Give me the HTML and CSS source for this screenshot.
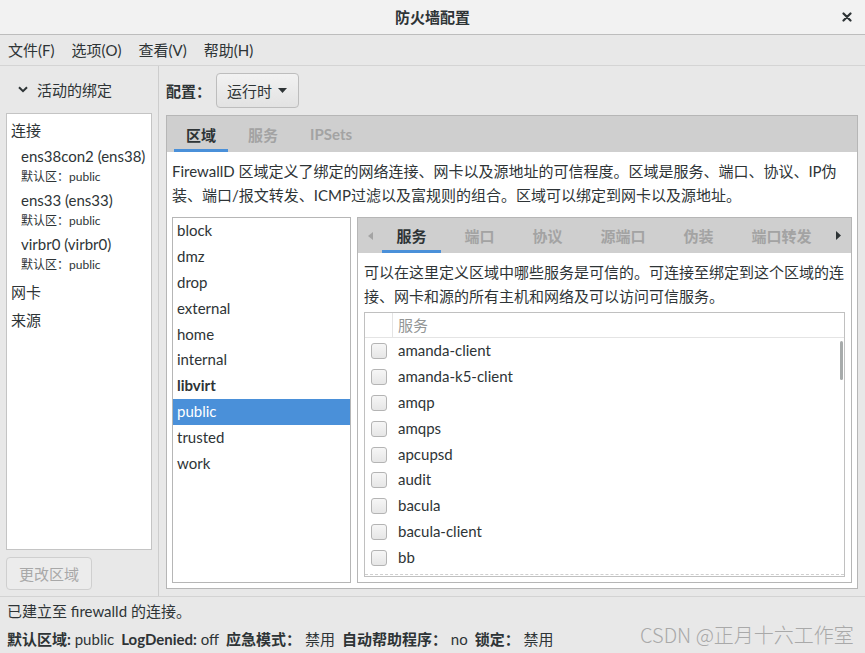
FILE: index.html
```html
<!DOCTYPE html>
<html lang="zh-CN">
<head>
<meta charset="utf-8">
<title>防火墙配置</title>
<link rel="stylesheet" href="styles.css">
</head>
<body>
<div class="window">
  <header class="titlebar">
    <span></span>
    <span class="title">防火墙配置</span>
    <span class="close">
      <svg width="10" height="10" viewBox="0 0 10 10"><path d="M1.5 1.5 L8.5 8.5 M8.5 1.5 L1.5 8.5" stroke="#2e3436" stroke-width="2.2" stroke-linecap="round"/></svg>
    </span>
  </header>
  <nav class="menubar">
    <span>文件(F)</span>
    <span>选项(O)</span>
    <span>查看(V)</span>
    <span>帮助(H)</span>
  </nav>
  <div class="main">
    <aside class="sidebar">
      <div class="side-head">
        <svg class="chev" width="10" height="7" viewBox="0 0 10 7"><path d="M1 1.2 L5 5.2 L9 1.2" fill="none" stroke="#2e3436" stroke-width="2"/></svg>
        <span>活动的绑定</span>
      </div>
      <div class="bindings">
        <div class="group">连接</div>
        <div class="device"><div class="dev-name">ens38con2 (ens38)</div><div class="dev-zone">默认区：public</div></div>
        <div class="device"><div class="dev-name">ens33 (ens33)</div><div class="dev-zone">默认区：public</div></div>
        <div class="device"><div class="dev-name">virbr0 (virbr0)</div><div class="dev-zone">默认区：public</div></div>
        <div class="group group-gap">网卡</div>
        <div class="group">来源</div>
      </div>
      <div class="side-foot">
        <button class="btn btn-disabled">更改区域</button>
      </div>
    </aside>
    <section class="content">
      <div class="config-row">
        <span class="config-label">配置：</span>
        <button class="btn combo">运行时
          <svg width="9" height="5" viewBox="0 0 9 5"><path d="M0 0 L9 0 L4.5 5 Z" fill="#2e3436"/></svg>
        </button>
      </div>
      <div class="notebook outer">
        <div class="tabs outer-tabs">
          <span class="tab active">区域</span>
          <span class="tab">服务</span>
          <span class="tab">IPSets</span>
        </div>
        <div class="page outer-page">
          <p class="desc">FirewallD 区域定义了绑定的网络连接、网卡以及源地址的可信程度。区域是服务、端口、协议、IP伪<br>装、端口/报文转发、ICMP过滤以及富规则的组合。区域可以绑定到网卡以及源地址。</p>
          <div class="zone-area">
            <ul class="zone-list">
              <li>block</li>
              <li>dmz</li>
              <li>drop</li>
              <li>external</li>
              <li>home</li>
              <li>internal</li>
              <li class="bold">libvirt</li>
              <li class="selected">public</li>
              <li>trusted</li>
              <li>work</li>
            </ul>
            <div class="notebook inner">
              <div class="tabs inner-tabs">
                <span class="arrow">
                  <svg width="5" height="8" viewBox="0 0 5 8"><path d="M5 0 L0 4 L5 8 Z" fill="#a4a4a4"/></svg>
                </span>
                <div class="inner-tab-list">
                  <span class="tab itab active">服务</span>
                  <span class="tab itab">端口</span>
                  <span class="tab itab">协议</span>
                  <span class="tab itab">源端口</span>
                  <span class="tab itab">伪装</span>
                  <span class="tab itab">端口转发</span>
                </div>
                <span class="arrow arrow-right">
                  <svg width="5" height="9" viewBox="0 0 5 9"><path d="M0 0 L5 4.5 L0 9 Z" fill="#2e3436"/></svg>
                </span>
              </div>
              <div class="page inner-page">
                <p class="desc inner-desc">可以在这里定义区域中哪些服务是可信的。可连接至绑定到这个区域的连<br>接、网卡和源的所有主机和网络及可以访问可信服务。</p>
                <div class="svc-table">
                  <div class="svc-head">
                    <span class="col-check"></span>
                    <span class="col-name head-name">服务</span>
                  </div>
                  <div class="svc-body">
                    <div class="svc-row"><span class="col-check"><span class="checkbox"></span></span><span class="col-name">amanda-client</span></div>
                    <div class="svc-row"><span class="col-check"><span class="checkbox"></span></span><span class="col-name">amanda-k5-client</span></div>
                    <div class="svc-row"><span class="col-check"><span class="checkbox"></span></span><span class="col-name">amqp</span></div>
                    <div class="svc-row"><span class="col-check"><span class="checkbox"></span></span><span class="col-name">amqps</span></div>
                    <div class="svc-row"><span class="col-check"><span class="checkbox"></span></span><span class="col-name">apcupsd</span></div>
                    <div class="svc-row"><span class="col-check"><span class="checkbox"></span></span><span class="col-name">audit</span></div>
                    <div class="svc-row"><span class="col-check"><span class="checkbox"></span></span><span class="col-name">bacula</span></div>
                    <div class="svc-row"><span class="col-check"><span class="checkbox"></span></span><span class="col-name">bacula-client</span></div>
                    <div class="svc-row"><span class="col-check"><span class="checkbox"></span></span><span class="col-name">bb</span></div>
                    <span class="scrollbar"></span>
                  </div>
                  <div class="svc-foot"></div>
                </div>
              </div>
            </div>
          </div>
        </div>
      </div>
    </section>
  </div>
  <footer class="statusbar">
    <div class="status-line">已建立至 firewalld 的连接。</div>
    <div class="status-line status-info">
      <span><b>默认区域:</b> public</span>
      <span><b>LogDenied:</b> off</span>
      <span><b>应急模式：</b> 禁用</span>
      <span><b>自动帮助程序：</b> no</span>
      <span><b>锁定：</b> 禁用</span>
    </div>
  </footer>
  <div class="watermark">CSDN @正月十六工作室</div>
</div>
</body>
</html>
```
FILE: styles.css
```css
html, body {
  margin: 0;
  padding: 0;
}
body {
  width: 865px;
  height: 653px;
  overflow: hidden;
  background: #e8e8e8;
  font-family: Lato, "Noto Sans CJK SC", sans-serif;
  font-size: 15px;
  color: #2e3436;
}
.window {
  position: relative;
  height: 653px;
  display: flex;
  flex-direction: column;
}

/* title bar */
.titlebar {
  height: 34px;
  flex: none;
  background: #f2f2f2;
  border-bottom: 1px solid #bdbdbd;
  display: grid;
  grid-template-columns: 1fr auto 1fr;
  align-items: center;
}
.title {
  font-weight: bold;
  line-height: 34px;
}
.close {
  justify-self: end;
  margin-right: 13px;
  display: flex;
}

/* menu bar */
.menubar {
  height: 30px;
  flex: none;
  border-bottom: 1px solid #d4d4d4;
  display: flex;
  align-items: center;
  gap: 17px;
  padding-left: 8px;
  line-height: 30px;
}

/* main */
.main {
  display: flex;
  height: 530px;
  flex: none;
}
.sidebar {
  box-sizing: border-box;
  width: 159px;
  border-right: 1px solid #cdcdcd;
  padding: 0 6px 6px;
  display: flex;
  flex-direction: column;
}
.side-head {
  height: 47px;
  flex: none;
  display: flex;
  align-items: center;
  gap: 9px;
  padding-left: 12px;
}
.bindings {
  flex: 1;
  background: #fff;
  border: 1px solid #c4c4c4;
  padding: 2px 0 0 4px;
}
.group {
  line-height: 28px;
}
.group-gap {
  margin-top: 2px;
}
.device {
  padding-left: 10px;
  height: 44px;
}
.dev-name {
  line-height: 24px;
  white-space: nowrap;
}
.dev-zone {
  font-size: 12px;
  line-height: 18px;
}
.side-foot {
  margin-top: 7px;
  flex: none;
}
.btn {
  box-sizing: border-box;
  height: 33px;
  border: 1px solid #bdbdbd;
  border-radius: 4px;
  background: linear-gradient(#f2f2f2, #e2e2e2);
  font-family: inherit;
  font-size: 15px;
  color: #2e3436;
  padding: 0 12px;
  white-space: nowrap;
}
.btn-disabled {
  background: #ececec;
  border-color: #cfcfcf;
  color: #a8a8a8;
  padding: 0 12px 0 12px;
}

/* content */
.content {
  flex: 1;
  display: flex;
  flex-direction: column;
  padding: 0 7px 7px;
  min-width: 0;
}
.config-row {
  height: 49px;
  flex: none;
  display: flex;
  align-items: center;
  gap: 5px;
}
.config-label {
  font-weight: bold;
}
.combo {
  height: 35px;
  display: flex;
  align-items: center;
  gap: 6px;
  padding: 0 11px 0 10px;
}

.notebook {
  border: 1px solid #b6b6b6;
  background: #fff;
  display: flex;
  flex-direction: column;
  min-height: 0;
  min-width: 0;
}
.outer {
  flex: 1;
}
.tabs {
  background: #cfcfcf;
  display: flex;
  flex: none;
}
.outer-tabs {
  height: 36px;
  padding-left: 7px;
  gap: 8px;
}
.tab {
  display: flex;
  align-items: center;
  padding: 0 12px;
  font-weight: bold;
  color: #a3a3a3;
  white-space: nowrap;
  flex: none;
}
.tab.active {
  color: #2e3436;
  box-shadow: inset 0 -3px 0 #4a90d9;
}
.page {
  display: flex;
  flex-direction: column;
  flex: 1;
  min-height: 0;
}
.outer-page {
  padding: 7px 5px 5px;
}
.desc {
  margin: 0 0 10px;
  line-height: 24px;
  white-space: nowrap;
}
.zone-area {
  flex: 1;
  display: flex;
  gap: 6px;
  min-height: 0;
}
.zone-list {
  box-sizing: border-box;
  width: 179px;
  flex: none;
  margin: 0;
  padding: 0;
  list-style: none;
  border: 1px solid #b6b6b6;
  background: #fff;
}
.zone-list li {
  height: 25.9px;
  line-height: 25.9px;
  padding-left: 4px;
}
.zone-list .bold {
  font-weight: bold;
}
.zone-list .selected {
  background: #4a90d9;
  color: #fff;
}

.inner {
  flex: 1;
}
.inner-tabs {
  height: 35px;
  overflow: hidden;
}
.arrow {
  width: 24px;
  display: flex;
  align-items: center;
  justify-content: center;
  flex: none;
}
.arrow-right {
  margin-left: auto;
  padding-right: 1px;
}
.inner-tab-list {
  display: flex;
  gap: 9px;
  flex: none;
}
.itab {
  padding: 0 14.5px;
}
.inner-page {
  padding: 7px 6px 5px;
}
.inner-desc {
  margin-bottom: 4px;
}

.svc-table {
  flex: 1;
  border: 1px solid #c0c0c0;
  display: flex;
  flex-direction: column;
  min-height: 0;
}
.svc-head {
  height: 24px;
  flex: none;
  border-bottom: 1px solid #e4e4e4;
  display: flex;
  line-height: 24px;
}
.svc-head .col-check {
  border-right: 1px solid #e4e4e4;
  width: 27px;
}
.head-name {
  color: #939696;
}
.col-check {
  width: 28px;
  flex: none;
  display: flex;
  align-items: center;
}
.col-name {
  padding-left: 5px;
}
.svc-body {
  flex: 1;
  position: relative;
  overflow: hidden;
  min-height: 0;
}
.svc-row {
  height: 25.9px;
  line-height: 25.9px;
  display: flex;
}
.checkbox {
  box-sizing: border-box;
  width: 16px;
  height: 16px;
  margin-left: 6px;
  border: 1px solid #b4b4b4;
  border-radius: 3px;
  background: linear-gradient(#f6f6f6, #e6e6e6);
}
.scrollbar {
  position: absolute;
  right: 1px;
  top: 3px;
  width: 3px;
  height: 39px;
  border-radius: 2px;
  background: #a7abab;
}
.svc-foot {
  height: 1px;
  flex: none;
  border-top: 1px dashed #cfcfcf;
}

/* status bar */
.statusbar {
  flex: 1;
  border-top: 1px solid #d3d3d3;
  padding-left: 7px;
}
.status-line {
  line-height: 28px;
  white-space: nowrap;
}
.status-info {
  display: flex;
  gap: 7px;
}

.watermark {
  position: absolute;
  left: 640px;
  top: 621px;
  font-family: "Noto Sans CJK SC", sans-serif;
  font-weight: 300;
  font-size: 20px;
  line-height: 28px;
  color: #a9a9a9;
  white-space: nowrap;
}
```
